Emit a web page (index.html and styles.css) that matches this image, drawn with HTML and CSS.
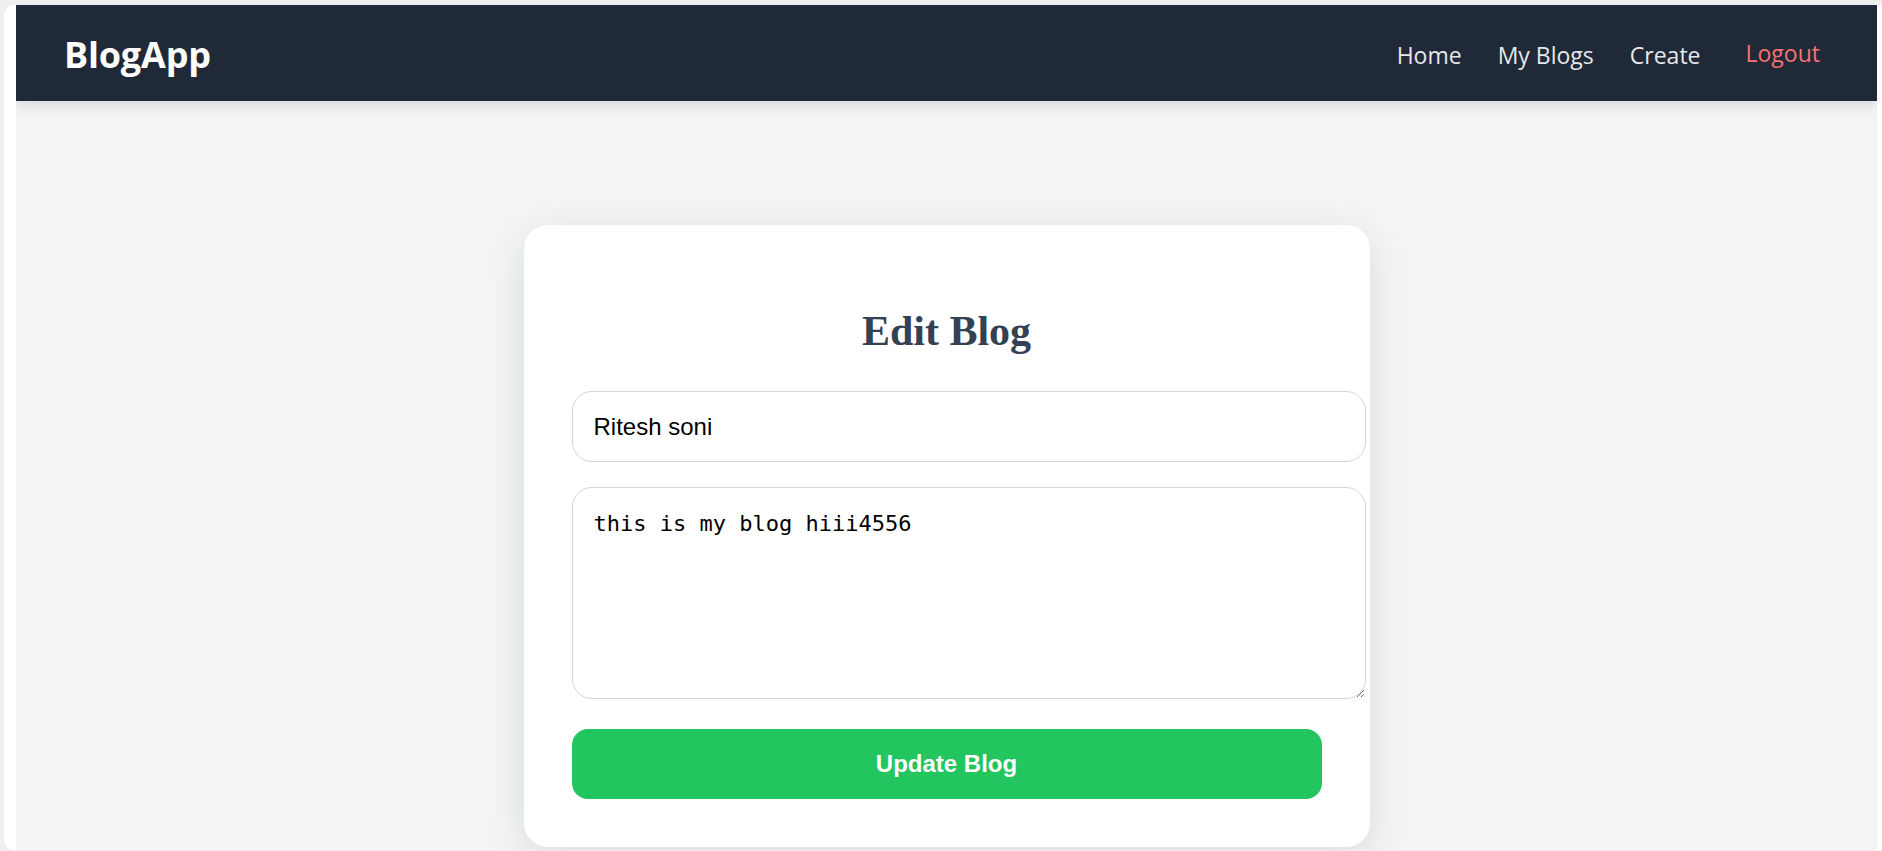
FILE: index.html
```html
<!DOCTYPE html>
<html lang="en">
<head>
<meta charset="utf-8">
<title>BlogApp - Edit Blog</title>
<link rel="stylesheet" href="styles.css">
</head>
<body>
<div class="window">
  <div class="app">
    <nav class="navbar">
      <a class="logo" href="#">BlogApp</a>
      <div class="links">
        <a class="link" href="#">Home</a>
        <a class="link" href="#">My Blogs</a>
        <a class="link" href="#">Create</a>
        <button class="logout" type="button">Logout</button>
      </div>
    </nav>
    <main class="main">
      <div class="card">
        <h2 class="title">Edit Blog</h2>
        <form class="form">
          <input class="field" type="text" value="Ritesh soni">
          <textarea class="area">this is my blog hiii4556</textarea>
          <button class="submit" type="button">Update Blog</button>
        </form>
      </div>
    </main>
  </div>
</div>
</body>
</html>
```

FILE: styles.css
```css
html, body {
  margin: 0;
  height: 100%;
  overflow: hidden;
}
body {
  background: #efefef;
}
.window {
  box-sizing: border-box;
  margin: 5px 0 0 4px;
  height: 845px;
  background: #ffffff;
  border-radius: 10px 0 0 10px;
  padding: 0 5px 0 12px;
  display: flex;
}
.app {
  flex: 1;
  display: flex;
  flex-direction: column;
  background: #f3f4f6;
  overflow: hidden;
  min-width: 0;
}
.navbar {
  position: relative;
  z-index: 1;
  flex: none;
  height: 96px;
  box-sizing: border-box;
  padding: 3px 57px 0 48px;
  background: #1f2937;
  display: flex;
  align-items: center;
  justify-content: space-between;
  box-shadow: 0 4px 14px rgba(0, 0, 0, 0.12);
  font-family: "Open Sans", "Noto Sans", sans-serif;
}
.logo {
  color: #ffffff;
  font-weight: 700;
  font-size: 36px;
  text-decoration: none;
  letter-spacing: -0.2px;
}
.links {
  display: flex;
  align-items: center;
  gap: 36px;
}
.link {
  color: #e5e7eb;
  font-size: 23px;
  text-decoration: none;
}
.logout {
  margin-left: 9px;
  margin-bottom: 3px;
  padding: 0;
  border: none;
  background: none;
  color: #f87171;
  font-family: inherit;
  font-size: 23px;
  cursor: pointer;
}
.main {
  flex: 1;
  display: flex;
  justify-content: center;
  align-items: flex-start;
  padding-top: 124px;
}
.card {
  width: 750px;
  padding: 48px;
  background: #ffffff;
  border-radius: 24px;
  box-shadow: 0 10px 40px rgba(0, 0, 0, 0.1);
  flex: none;
}
.title {
  margin: 34px 0 36px;
  font-family: "Liberation Serif", "Times New Roman", serif;
  font-weight: 700;
  font-size: 42px;
  line-height: 48px;
  text-align: center;
  color: #334155;
}
.form {
  display: block;
  margin: 0;
}
.field {
  display: block;
  width: 100%;
  box-sizing: content-box;
  margin: 0;
  padding: 20px 21px;
  border: 1px solid #d1d5db;
  border-radius: 20px;
  font-family: "Liberation Sans", Arial, sans-serif;
  font-size: 24px;
  line-height: 29px;
  height: 29px;
  color: #000000;
  background: #ffffff;
  outline: none;
}
.area {
  display: block;
  width: 100%;
  box-sizing: content-box;
  margin: 25px 0 0;
  padding: 21px;
  height: 168px;
  border: 1px solid #d1d5db;
  border-radius: 20px;
  font-family: "DejaVu Sans Mono", "Liberation Mono", monospace;
  font-size: 22px;
  line-height: 30px;
  color: #000000;
  background: #ffffff;
  resize: vertical;
  outline: none;
}
.submit {
  display: block;
  width: 100%;
  height: 70px;
  margin: 30px 0 0;
  padding: 0;
  border: none;
  border-radius: 16px;
  background: #22c55e;
  color: #ffffff;
  font-family: "Liberation Sans", Arial, sans-serif;
  font-weight: 700;
  font-size: 24px;
  cursor: pointer;
}
```
